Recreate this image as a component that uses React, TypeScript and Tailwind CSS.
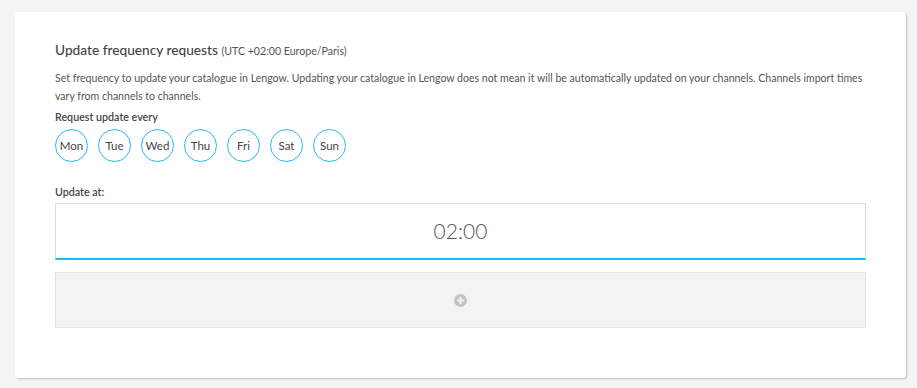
import { useState } from 'react';

const DAYS = ['Mon', 'Tue', 'Wed', 'Thu', 'Fri', 'Sat', 'Sun'];

function PlusCircle() {
  return (
    <svg width="13" height="13" viewBox="0 0 14 14" aria-hidden="true">
      <circle cx="7" cy="7" r="7" fill="#c2c2c2" />
      <rect x="6" y="3" width="2" height="8" fill="#f3f3f3" />
      <rect x="3" y="6" width="8" height="2" fill="#f3f3f3" />
    </svg>
  );
}

export default function App() {
  const [selected, setSelected] = useState<string[]>([]);

  const toggleDay = (day: string) => {
    setSelected((prev) =>
      prev.includes(day) ? prev.filter((d) => d !== day) : [...prev, day]
    );
  };

  return (
    <div className="min-h-[388px] bg-[#f4f4f4] pt-[12px] pl-[15px] pr-[11px] pb-[11px] font-['Lato','Liberation_Sans',sans-serif] text-[#4a4a4a]">
      <div className="rounded-[3px] bg-white px-[40px] pt-[29px] pb-[50px] shadow-[1px_1px_2px_rgba(0,0,0,0.22)]">
        <h2 className="text-[13.7px] leading-[18px] font-medium text-[#444]">
          Update frequency requests{' '}
          <span className="text-[10.6px] font-normal text-[#555]">(UTC +02:00 Europe/Paris)</span>
        </h2>

        <p className="mt-[9px] text-[10.55px] leading-[18px] text-[#555]">
          Set frequency to update your catalogue in Lengow. Updating your catalogue in Lengow does not mean it will be
          automatically updated on your channels. Channels import times vary from channels to channels.
        </p>

        <div className="mt-[4px] text-[10.7px] leading-[16px] font-semibold text-[#444]">Request update every</div>

        <div className="mt-[4px] flex gap-[10px]">
          {DAYS.map((day) => {
            const active = selected.includes(day);
            return (
              <button
                key={day}
                type="button"
                onClick={() => toggleDay(day)}
                className={`flex h-[33px] w-[33px] items-center justify-center rounded-full border-[1.5px] border-[#22b8ef] text-[11.5px] ${
                  active ? 'bg-[#22b8ef] text-white' : 'bg-white text-[#444]'
                }`}
              >
                {day}
              </button>
            );
          })}
        </div>

        <div className="mt-[22px] text-[10.7px] leading-[16px] font-semibold text-[#444]">Update at:</div>

        <div className="mt-[3px] flex h-[57px] items-center justify-center border border-b-2 border-[#dadada] border-b-[#18bdf2] bg-white">
          <span className="text-[21px] font-light text-[#555]">02:00</span>
        </div>

        <button
          type="button"
          className="mt-[12px] flex h-[56px] w-full items-center justify-center border border-dotted border-[#d6d6d6] bg-[#f3f3f3]"
        >
          <PlusCircle />
        </button>
      </div>
    </div>
  );
}
